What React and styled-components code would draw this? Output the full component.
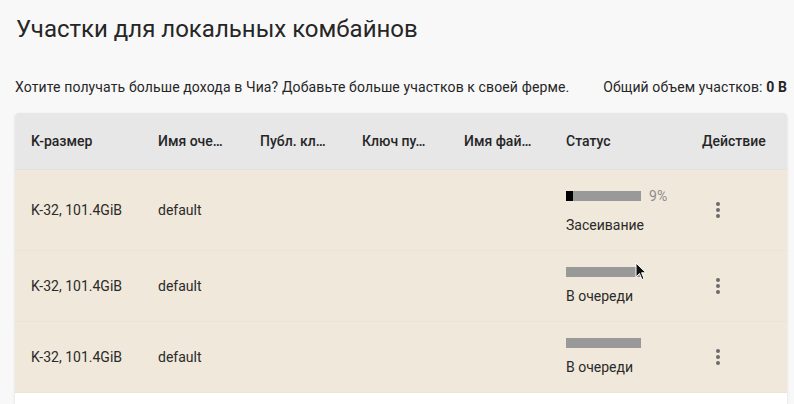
import React from 'react';
import styled, { createGlobalStyle } from 'styled-components';

const rows = [
  { size: 'K-32, 101.4GiB', queue: 'default', progress: 9, state: 'Засеивание' },
  { size: 'K-32, 101.4GiB', queue: 'default', progress: null, state: 'В очереди', cursor: true },
  { size: 'K-32, 101.4GiB', queue: 'default', progress: null, state: 'В очереди' },
];

const columns = ['K-размер', 'Имя оче…', 'Публ. кл…', 'Ключ пу…', 'Имя фай…', 'Статус', 'Действие'];

const MoreIcon = () => (
  <svg width="4" height="16" viewBox="0 0 4 16">
    <circle cx="2" cy="2" r="2" fill="#6b6b6b" />
    <circle cx="2" cy="8" r="2" fill="#6b6b6b" />
    <circle cx="2" cy="14" r="2" fill="#6b6b6b" />
  </svg>
);

const CursorIcon = () => (
  <svg width="12" height="19" viewBox="0 0 12 19">
    <path d="M1 1 L1 15 L4.5 11.5 L7 17.5 L9 16.6 L6.6 10.8 L11 10.8 Z" fill="#111" stroke="#fff" strokeWidth="1" />
  </svg>
);

const App = () => {
  return (
    <>
      <GlobalStyle />
      <Page>
        <Title>Участки для локальных комбайнов</Title>
        <InfoRow>
          <span>Хотите получать больше дохода в Чиа? Добавьте больше участков к своей ферме.</span>
          <span>
            Общий объем участков: <b>0 B</b>
          </span>
        </InfoRow>
        <Paper>
          <Table>
            <colgroup>
              <col style={{ width: 127 }} />
              <col style={{ width: 102 }} />
              <col style={{ width: 102 }} />
              <col style={{ width: 102 }} />
              <col style={{ width: 102 }} />
              <col style={{ width: 136 }} />
              <col />
            </colgroup>
            <thead>
              <tr>
                {columns.map((c) => (
                  <HeadCell key={c}>{c}</HeadCell>
                ))}
              </tr>
            </thead>
            <tbody>
              {rows.map((r, i) => (
                <Row key={i} $first={i === 0}>
                  <Cell>{r.size}</Cell>
                  <Cell>{r.queue}</Cell>
                  <Cell />
                  <Cell />
                  <Cell />
                  <Cell>
                    <Status>
                      <BarLine>
                        <Bar>
                          {r.progress !== null && <Fill style={{ width: `${r.progress}%` }} />}
                          {r.cursor && (
                            <Cursor>
                              <CursorIcon />
                            </Cursor>
                          )}
                        </Bar>
                        {r.progress !== null && <Percent>{r.progress}%</Percent>}
                      </BarLine>
                      <span>{r.state}</span>
                    </Status>
                  </Cell>
                  <Cell>
                    <Action>
                      <MoreIcon />
                    </Action>
                  </Cell>
                </Row>
              ))}
            </tbody>
          </Table>
          <Footer />
        </Paper>
      </Page>
    </>
  );
};

export default App;

// STYLED COMPONENTS
const GlobalStyle = createGlobalStyle`
  body {
    margin: 0;
    background: #f8f8f8;
    font-family: Roboto, "Noto Sans", sans-serif;
    color: #222;
  }
`;

const Page = styled.div`
  padding: 13px 7px 0 15px;
  overflow: hidden;
  height: 404px;
  box-sizing: border-box;
`;

const Title = styled.h1`
  margin: 0 0 0 1px;
  font-size: 24px;
  font-weight: 400;
  line-height: 32px;
  color: #262626;
`;

const InfoRow = styled.div`
  display: flex;
  justify-content: space-between;
  margin-top: 32px;
  font-size: 14px;
  line-height: 20px;
  color: #262626;
  letter-spacing: 0.12px;

  b {
    font-weight: 700;
  }
`;

const Paper = styled.div`
  margin-top: 16px;
  background: #fff;
  border-radius: 4px;
  box-shadow: 0 1px 3px rgba(0, 0, 0, 0.12);
  overflow: hidden;
`;

const Table = styled.table`
  width: 100%;
  border-collapse: collapse;
  table-layout: fixed;
  font-size: 14px;
`;

const HeadCell = styled.th`
  background: #e7e7e7;
  height: 56px;
  padding: 0 16px;
  text-align: left;
  font-weight: 500;
  color: #262626;
  white-space: nowrap;
  overflow: hidden;
  text-overflow: ellipsis;
  border-bottom: 1px solid #e0e0e0;
`;

const Row = styled.tr`
  background: #f0e8da;
  height: ${(p) => (p.$first ? '81px' : '71px')};
  border-bottom: 1px solid #e9e3d8;
`;

const Cell = styled.td`
  padding: 0 16px;
  vertical-align: middle;
  color: #2a2a2a;
  white-space: nowrap;
`;

const Status = styled.div`
  display: flex;
  flex-direction: column;
  align-items: flex-start;
  gap: 9px;
  line-height: 20px;
`;

const BarLine = styled.div`
  display: flex;
  align-items: center;
  gap: 8px;
`;

const Bar = styled.div`
  position: relative;
  width: 75px;
  height: 10px;
  background: #999;
`;

const Fill = styled.div`
  height: 100%;
  background: #000;
`;

const Percent = styled.span`
  color: #8c8c8c;
  font-size: 14px;
  line-height: 20px;
`;

const Cursor = styled.div`
  position: absolute;
  left: 69px;
  top: -5px;
  line-height: 0;
`;

const Action = styled.div`
  display: flex;
  padding-left: 14px;
`;

const Footer = styled.div`
  height: 20px;
`;
